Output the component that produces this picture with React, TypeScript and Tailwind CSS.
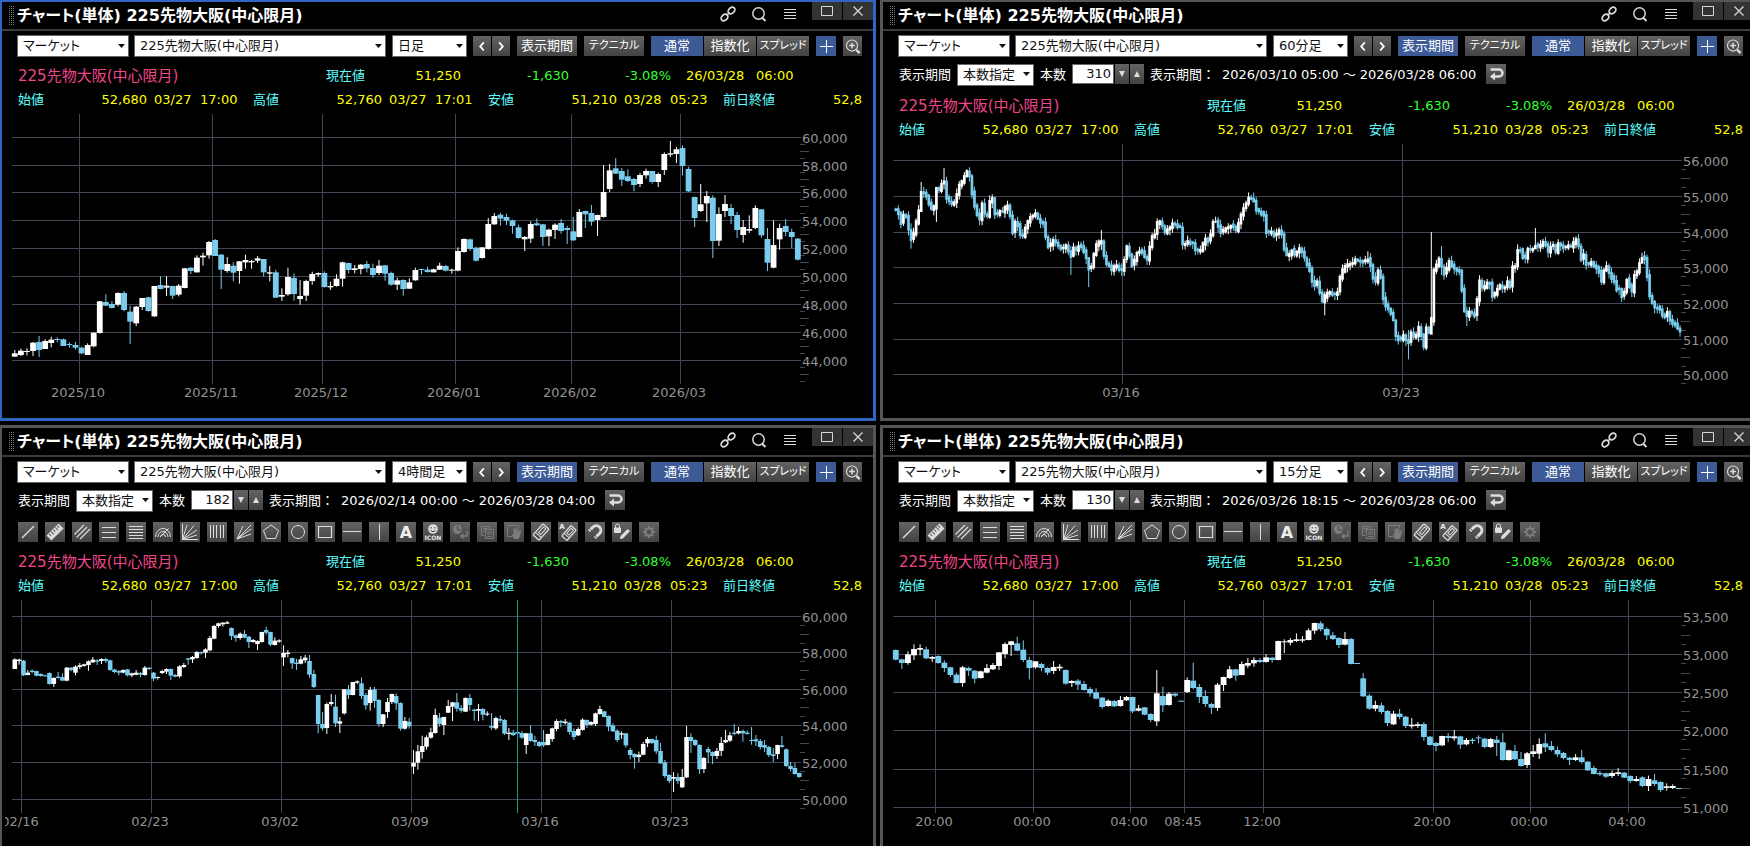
import { Fragment } from 'react'
import type { ReactNode } from 'react'

type Candle = { up: boolean; top: number; bottom: number; high: number; low: number }

type ChartSpec = {
  candles: Candle[]
  step: number
  bodyWidth: number
  /* offset of the plot top in candle units (3 units = 1px) */
  origin: number
  plotHeight: number
  height: number
  rows: { at: number; label: string }[]
  cols: { x: number; label: string }[]
  marker?: number
}

type PanelSpec = {
  id: string
  active?: boolean
  interval: string
  period?: { count: string; range: string }
  tools?: boolean
  chart: ChartSpec
  frame: string
}

/* w = 陽線, b = 陰線: body top, body bottom, high, low */
const parse = (source: string): Candle[] =>
  source
    .trim()
    .split(/\s+/)
    .map((token) => {
      const [top, bottom, high, low] = token.slice(1).split(',').map(Number)
      return { up: token[0] === 'w', top, bottom, high: high ?? top, low: low ?? bottom }
    })

const DAILY = parse(`
w730,740,720,740 w722,735,716,738 w723,726,715,736 w698,723,696,738 b696,720,678,741 w693,717,688,717
w689,699,680,712 b687,690,682,697 b688,708,686,708 b702,705,697,713 b705,713,696,719 b713,730,710,733
w705,735,700,735 w668,709,667,712 w574,669,573,671 b576,587,553,588 b582,594,573,595 w549,584,547,589
b549,600,543,604 b605,635,587,702 w590,640,588,648 w564,591,564,600 b562,603,560,605 w528,619,528,621
b525,537,499,538 w527,533,499,558 b528,557,527,567 w527,554,522,559 w475,534,474,535 b473,483,472,492
w443,487,436,488 w437,442,428,467 w396,436,393,446 b390,438,387,438 b434,479,432,537 w462,483,441,488
b467,488,457,514 w454,483,453,521 w450,457,434,476 w453,457,450,476 w445,452,438,459 b447,487,447,500
w487,491,468,514 b487,563,479,563 w555,560,535,573 w501,553,473,557 b504,552,490,572 w558,567,510,584
w513,557,509,573 w492,513,485,524 w489,494,487,500 b489,531,484,533 w528,532,515,540 w506,528,493,530
w457,506,455,530 b459,480,458,490 w475,480,465,490 w464,477,462,493 b462,475,453,487 b474,495,461,503
w467,489,450,495 b466,491,465,512 b489,524,485,527 w511,524,503,540 b510,537,508,557 w517,536,505,537
w480,511,473,512 b477,480,476,494 b479,486,470,488 w478,487,476,488 w467,479,458,480 b468,482,465,484
w479,482,476,491 w423,482,412,484 w387,426,385,428 b388,417,386,422 b413,452,410,455 w412,444,411,446
w342,417,324,419 w318,343,309,345 b314,326,308,347 b321,332,311,345 b331,348,329,371 b352,384,344,386
w381,388,378,423 w342,386,334,399 b340,346,325,348 b343,381,342,408 w359,379,356,408 w344,360,340,387
b339,363,327,371 b354,360,348,402 b364,391,321,393 w306,381,297,382 b303,313,302,354 b309,335,285,347
w315,330,314,378 w246,321,165,323 w181,237,162,246 b175,191,144,192 b183,209,174,228 b199,213,178,216
b207,225,204,244 w195,222,189,231 w183,196,176,206 b183,216,183,221 w192,216,188,231 w132,180,127,195
w130,134,93,141 w118,132,111,159 b114,168,106,196 b177,244,170,246 b261,324,260,351 w283,303,222,306
w258,280,243,336 b263,393,256,444 w312,392,292,408 w282,303,255,321 b294,318,282,342 b315,360,306,384
w351,375,330,398 w357,362,316,369 w294,354,286,357 b298,376,297,383 b387,458,354,483 w405,473,331,475
w354,388,341,419 b348,366,327,378 b366,381,356,414 b386,449,384,451`)

const FOUR_HOUR = parse(`
w208,237,205,237 w209,213,206,224 b212,256,210,258 w248,255,240,256 b242,246,238,250 b243,257,242,259
b252,258,250,260 b256,259,254,260 b249,282,247,284 w264,282,262,291 b260,264,246,266 b261,272,250,273
w233,272,231,274 b233,240,231,244 w230,248,226,256 w226,231,219,237 w223,228,221,230 w214,225,211,242
w209,217,201,219 b211,215,208,225 w207,213,205,222 b207,213,204,219 b211,240,209,243 b239,246,236,250
b243,248,240,256 w240,248,238,250 b238,256,237,259 w250,256,248,261 w248,254,240,256 b249,254,246,262
w233,255,228,257 b233,237,232,240 b248,266,246,273 w261,264,259,269 w243,249,239,252 w237,245,235,252
b237,257,235,270 b255,260,252,262 w229,259,226,263 w225,231,219,234 b205,209,204,224 w201,208,198,219
w186,204,183,206 b186,190,184,194 w178,188,175,204 w144,181,138,184 w108,146,105,148 w100,108,98,113
w98,103,96,110 w97,101,93,102 b114,138,112,150 b136,144,134,155 w131,144,127,149 b132,143,120,145
b140,156,138,174 w150,156,147,158 w153,162,151,180 w126,156,125,158 b120,128,110,134 b126,164,125,168
w152,165,142,166 w151,155,148,158 w189,202,166,228 w188,192,180,202 b204,220,203,237 b218,222,206,240
w208,221,198,223 w203,211,195,219 b213,254,195,263 b252,291,240,294 b315,402,315,430 b402,415,366,422
w342,414,338,432 w336,342,312,348 b350,400,314,411 w394,401,381,429 w298,370,297,374 b298,315,285,327
w276,315,276,316 w274,278,271,282 b280,318,262,327 b315,346,309,359 w300,339,291,362 b298,333,291,353
b330,402,327,410 w373,402,372,411 w336,366,324,384 w312,336,311,342 b318,340,310,360 b339,416,337,422
w393,416,381,419 b395,409,384,416 w518,530,480,552 w484,518,465,539 w468,486,437,506 w442,470,436,479
w427,443,413,446 w375,429,356,431 b383,402,369,410 w381,405,380,435 w348,368,330,369 w337,350,336,393
b337,356,309,365 b354,362,345,368 w324,365,322,366 b324,345,312,362 b359,363,356,392 w357,362,342,393
b357,374,354,391 w371,374,364,378 b408,413,369,420 w384,415,380,420 b387,392,376,399 b390,431,387,435
w428,432,414,450 b428,435,420,438 b426,431,417,474 b429,443,423,447 w430,465,429,492 b430,453,405,455
b450,456,437,468 b456,468,453,471 b456,466,420,471 w432,465,431,466 w415,447,413,455 w393,417,388,424
b393,398,390,412 w395,399,387,404 b398,426,395,434 b423,441,415,450 w417,436,412,438 w389,420,385,422
b390,405,388,414 w396,404,394,406 w370,402,368,408 w357,372,347,374 b364,381,362,382 b378,410,376,424
b406,424,400,426 b422,450,418,456 w430,434,424,446 b430,466,429,473 b480,495,474,508 b492,502,489,536
w494,501,485,516 w462,494,456,496 w447,460,441,471 b447,459,446,462 b450,484,437,492 b483,520,459,522
b517,558,510,564 b555,573,552,579 w561,566,546,606 b561,573,549,582 w561,592,537,594 w441,562,408,564
b441,453,430,489 b450,465,448,468 b465,538,463,552 w504,537,501,549 b477,487,471,519 b486,498,484,522
w483,498,474,507 w459,483,441,498 w450,457,420,459 w436,452,426,456 b428,432,402,436 w423,430,411,433
b423,430,418,455 b428,432,422,434 b450,453,411,464 b448,454,435,468 b453,471,447,479 b465,473,450,486
b471,495,468,501 b493,498,474,516 w465,492,464,507 b466,471,438,473 b478,528,475,531 b528,537,516,544
b534,552,519,554 b549,561,548,563`)

const QUARTER = parse(`
b180,209,178,211 b208,219,206,237 w193,219,184,224 w177,196,163,210 w174,179,163,196 b178,205,170,208
w201,206,198,216 b198,219,196,221 b218,234,211,246 b232,255,230,261 b254,279,248,280 w232,279,228,290
b234,242,230,258 b242,266,240,280 w244,264,242,266 w234,248,222,250 w225,238,219,240 w187,228,186,240
w162,192,157,205 w154,165,153,198 b160,182,140,184 b179,210,151,216 b210,234,201,268 w214,232,213,236
b222,234,219,244 b234,248,232,255 w231,243,213,252 w230,235,222,243 b240,281,238,284 w273,279,270,291
b272,284,267,300 b282,300,273,302 b297,310,291,320 b307,326,295,328 b323,351,321,356 w332,348,328,350
b333,349,330,351 w330,348,318,350 w321,331,318,333 b321,364,320,369 w355,362,345,364 b352,374,351,376
b372,390,369,396 w310,394,240,408 b318,346,290,366 w311,345,306,347 b311,317,309,321 b332,335
w270,306,262,309 b272,294,218,298 b291,321,282,339 b318,342,300,351 b342,353,339,372 w284,354,279,363
w261,285,260,303 w238,264,228,267 b238,257,236,272 w222,255,214,256 w219,227,204,234 w210,220,202,230
b210,216,204,219 w202,216,192,218 b203,210,201,218 w153,210,152,211 w154,157,148,189 w150,158,144,166
w148,153,130,156 w148,152,138,158 w121,150,115,151 w99,122,98,132 b100,118,94,124 b117,136,112,150
b136,147,126,150 b144,165,142,174 w147,164,126,166 b147,222,144,223 b219,222 b265,319,249,321
b317,356,312,359 w345,356,332,364 b346,366,338,372 b363,399,360,408 w371,403,362,405 b371,381,357,388
b380,408,378,414 w404,409,384,416 w403,408,396,414 b402,441,397,452 b440,465,438,467 b459,468,456,484
w438,466,437,468 b438,444,429,456 w439,445,420,452 b439,464,437,477 w450,463,444,466 b449,453,444,462
b442,444,436,460 b446,471,444,474 w447,471,444,474 b449,459,438,498 b457,510,429,512 w481,510,479,512
b483,508,465,510 b507,528,486,530 w490,525,486,534 w484,492,465,501 w462,491,445,507 b460,472,430,486
b468,480,453,484 b480,493,470,500 b489,504,486,508 b503,510,501,525 w502,510,492,513 b502,516,480,521
b515,541,513,543 b534,552,528,553 b549,553,543,558 b550,560,548,564 w549,558,541,564 w547,552,534,558
b548,563,546,564 b558,573,556,579 w567,573,558,575 b562,588,559,591 w567,588,557,603 b571,582,552,588
b576,600,574,606 w589,594,580,602 w588,594,583,597 b594,596`)

/* 60分足: turning points of the close, candles are built between them */
const HOURLY_POINTS = `
26:205 34:222 37:248 45:210 49:250 55:298 59:290 67:228 71:200 72:155 80:155 88:190 96:222 99:140 106:148
114:115 120:175 127:190 134:185 141:140 148:122 156:92 164:115 166:175 173:215 180:240 183:185 191:240
198:180 202:175 208:232 214:210 221:215 228:193 233:208 237:285 245:230 251:285 257:285 265:245 272:225
280:222 287:245 295:245 299:305 304:322 311:300 318:310 324:322 332:320 337:315 342:360 347:320 355:330
358:312 365:325 370:345 375:385 382:375 386:322 394:305 400:303 404:360 412:378 418:390 424:372 430:385
437:390 438:370 444:320 449:345 455:383 460:340 470:328 475:350 483:358 487:290 495:280 500:240 506:248
512:275 520:262 528:250 536:258 542:262 545:315 552:305 560:308 565:308 568:330 574:332 580:320 584:295
592:302 596:275 600:240 607:245 611:275 617:270 624:262 632:255 642:270 648:230 655:200 663:175 672:178
677:205 686:218 692:228 697:295 702:265 708:285 718:272 724:285 728:330 734:352 740:325 747:345 756:322
762:340 766:365 773:385 778:425 781:445 785:410 790:445 797:490 801:465 808:455 815:460 822:462 826:440
829:400 834:385 840:372 848:370 855:360 860:362 870:362 878:355 882:365 885:405 892:425 896:388 902:410
906:480 912:500 919:515 925:545 929:590 936:598 943:585 947:600 949:652 953:575 958:575 963:598 970:560
976:592 980:630 982:555 988:578 992:575 994:440 999:360 1003:380 1008:342 1013:405 1018:395 1025:362
1033:383 1042:390 1046:410 1049:490 1054:530 1062:512 1071:525 1076:465 1080:415 1085:450 1092:425
1098:430 1103:472 1110:450 1117:432 1123:445 1130:425 1134:445 1136:380 1144:378 1149:315 1154:335
1160:360 1167:322 1173:330 1180:315 1188:318 1196:300 1203:335 1210:308 1216:335 1222:305 1228:320
1238:318 1246:320 1251:292 1257:305 1260:360 1267:345 1273:380 1279:362 1286:375 1295:395 1299:425
1306:370 1314:402 1322:425 1328:455 1332:442 1337:480 1344:415 1349:435 1353:460 1357:408 1364:390
1370:350 1377:355 1379:400 1383:410 1385:465 1392:490 1397:510 1401:495 1406:520 1412:530 1417:512
1425:550 1432:552 1437:570 1443:572`
  .trim()
  .split(/\s+/)
  .map((pair) => pair.split(':').map(Number))

/* candle index -> [high, low] for the long wicks */
const HOURLY_WICKS: Record<number, [number, number]> = {
  6: [250, 326], 10: [126, 195], 19: [84, 148], 16: [150, 246], 69: [318, 405], 76: [378, 441], 81: [270, 330],
  141: [158, 185], 169: [455, 526], 202: [570, 658], 211: [276, 580], 215: [318, 405], 252: [264, 320],
  294: [338, 360], 225: [500, 558], 186: [334, 372],
}

const levelAt = (x: number) => {
  const next = HOURLY_POINTS.findIndex(([px]) => px >= x)
  if (next <= 0) return HOURLY_POINTS[next === 0 ? 0 : HOURLY_POINTS.length - 1][1]
  const [x0, y0] = HOURLY_POINTS[next - 1]
  const [x1, y1] = HOURLY_POINTS[next]
  return y0 + ((y1 - y0) * (x - x0)) / (x1 - x0)
}

const HOURLY: Candle[] = Array.from({ length: 310 }, (_, i) => {
  const x = 26 + i * 4.57
  const open = levelAt(x - 2.3)
  const close = levelAt(x + 2.3)
  const top = Math.min(open, close) - ((i * 5) % 6)
  const bottom = Math.max(open, close) + 3 + ((i * 3) % 7)
  const [high, low] = HOURLY_WICKS[i] ?? [top - 2 - ((i * 7) % 13), bottom + 2 + ((i * 11) % 14)]
  return { up: close < open, top, bottom, high, low }
})

const labels = (from: number, by: number, at: number[]) =>
  at.map((y, i) => ({ at: y, label: (from - i * by).toLocaleString('en-US') }))

const PANELS: PanelSpec[] = [
  {
    id: 'daily',
    active: true,
    interval: '日足',
    frame: 'border-t-2 border-l-2 border-r-3 border-b-3',
    chart: {
      candles: DAILY,
      step: 6.07,
      bodyWidth: 5.8,
      origin: 12,
      plotHeight: 270,
      height: 300,
      rows: labels(60000, 2000, [82, 166, 247, 331, 415, 499, 583, 667, 751]),
      cols: [
        { x: 79, label: '2025/10' },
        { x: 212, label: '2025/11' },
        { x: 322, label: '2025/12' },
        { x: 455, label: '2026/01' },
        { x: 571, label: '2026/02' },
        { x: 680, label: '2026/03' },
      ],
    },
  },
  {
    id: 'hourly',
    interval: '60分足',
    frame: 'border-t-2 border-l-3 border-r-2 border-b-3',
    period: { count: '310', range: '2026/03/10 05:00 ～ 2026/03/28 06:00' },
    chart: {
      candles: HOURLY,
      step: 2.538,
      bodyWidth: 2.7,
      origin: 12,
      plotHeight: 240,
      height: 270,
      rows: labels(56000, 1000, [61, 169, 277, 382, 490, 598, 703]),
      cols: [
        { x: 241, label: '03/16' },
        { x: 521, label: '03/23' },
      ],
    },
  },
  {
    id: 'four-hour',
    interval: '4時間足',
    frame: 'border-t-3 border-l-2 border-r-3 border-b-3',
    period: { count: '182', range: '2026/02/14 00:00 ～ 2026/03/28 04:00' },
    tools: true,
    chart: {
      candles: FOUR_HOUR,
      step: 4.334,
      bodyWidth: 4.6,
      origin: 30,
      plotHeight: 213,
      height: 240,
      rows: labels(60000, 2000, [79, 187, 298, 406, 517, 628]),
      cols: [
        { x: 21, label: '02/16' },
        { x: 151, label: '02/23' },
        { x: 281, label: '03/02' },
        { x: 411, label: '03/09' },
        { x: 541, label: '03/16' },
        { x: 671, label: '03/23' },
      ],
      marker: 517,
    },
  },
  {
    id: 'quarter',
    interval: '15分足',
    frame: 'border-t-3 border-l-3 border-r-2 border-b-3',
    period: { count: '130', range: '2026/03/26 18:15 ～ 2026/03/28 06:00' },
    tools: true,
    chart: {
      candles: QUARTER,
      step: 6.07,
      bodyWidth: 5.8,
      origin: 30,
      plotHeight: 213,
      height: 240,
      rows: labels(53500, 500, [79, 193, 307, 421, 538, 652]),
      cols: [
        { x: 54, label: '20:00' },
        { x: 152, label: '00:00' },
        { x: 249, label: '04:00' },
        { x: 303, label: '08:45' },
        { x: 382, label: '12:00' },
        { x: 552, label: '20:00' },
        { x: 649, label: '00:00' },
        { x: 747, label: '04:00' },
      ],
    },
  },
]

const BUTTON = 'flex h-5 shrink-0 items-center justify-center whitespace-nowrap'
const GRAY = 'bg-linear-to-b from-[#636363] to-[#434343]'
const BLUE = 'bg-[#3c5a96]'

function Icon({ size = 20, children }: { size?: number; children: ReactNode }) {
  return (
    <svg
      width={size}
      height={size}
      viewBox="0 0 20 20"
      fill="none"
      stroke="currentColor"
      strokeWidth="1"
      className="shrink-0"
      aria-hidden="true"
    >
      {children}
    </svg>
  )
}

const DRAW_TOOLS: { name: string; dim?: boolean; art: ReactNode }[] = [
  { name: 'トレンドライン', art: <path d="M4 16 16 4" strokeWidth="1.5" /> },
  {
    name: '定規',
    art: (
      <g transform="rotate(-45 10 10)">
        <rect x="1.5" y="6.500" width="17" height="7" fill="#ddd" stroke="none" />
        <path d="M4.500 7v3M7.500 7v4M10.500 7v3M13.500 7v4M16 7v3" stroke="#555" />
      </g>
    ),
  },
  { name: '平行線', art: <path d="M2.500 12.500 12 3M4.500 15.500 15 5M8 17l10-10" strokeWidth="1.200" /> },
  { name: '3本線', art: <path d="M3 5.500h14M3 10.500h14M3 15.500h14" /> },
  { name: '5本線', art: <path d="M3 4.500h14M3 7.500h14M3 10.500h14M3 13.500h14M3 16.500h14" /> },
  {
    name: 'アーク',
    art: <path d="M2.500 15a7.500 8.500 0 0 1 15 0M5 15a5 5.500 0 0 1 10 0M7.500 15a2.500 2.500 0 0 1 5 0M7 15l8.500-8.500" />,
  },
  { name: 'ファン', art: <path d="M2.500 2v15.500H18M2.500 17.500 7 3M2.500 17.500 14 3.500M2.500 17.500 17 8M2.500 17.500 17 13" /> },
  { name: '縦線5本', art: <path d="M3.500 3v13M6.500 3v13M9.500 3v13M13.500 3v13M16.500 3v13" /> },
  { name: 'スピードライン', art: <path d="M3 17 9 4M3 17 17 3M3 17l14-10M3 17l14-5" /> },
  { name: '五角形', art: <path d="M10 3 17.500 8.500 14.500 16.500h-9L2.500 8.500z" /> },
  { name: '円', art: <circle cx="10" cy="10" r="6.500" /> },
  { name: '四角形', art: <path d="M3.500 4.500h13v11h-13z" strokeWidth="1.200" /> },
  { name: '水平線', art: <path d="M1 9.500h18" /> },
  { name: '垂直線', art: <path d="M10.500 2v16" /> },
  {
    name: 'テキスト',
    art: (
      <text x="10" y="16" textAnchor="middle" fontSize="16" fontWeight="700" fill="#eee" stroke="none">
        A
      </text>
    ),
  },
  {
    name: 'アイコン',
    art: (
      <>
        <circle cx="10" cy="7" r="4.800" fill="#ddd" stroke="none" />
        <path d="M8.200 5v1.500M11.800 5v1.500M7.500 8.500q2.500 2.500 5 0" stroke="#444" />
        <text x="10" y="18" textAnchor="middle" fontSize="6" fontWeight="700" fill="#eee" stroke="none">
          ICON
        </text>
      </>
    ),
  },
  {
    name: '履歴',
    dim: true,
    art: (
      <>
        <circle cx="7.500" cy="7.500" r="4.500" fill="currentColor" stroke="none" />
        <path d="M7.500 4v4h4" stroke="#484848" />
        <path d="M17 9v5h-5M13.500 12l-2.500 2 2.500 2.500" strokeWidth="1.500" />
      </>
    ),
  },
  {
    name: 'コピー',
    dim: true,
    art: <path d="M7 13.500H4.500v-9h8V7M6 6.500h4M6 9h2M8.500 7.500h8v9h-8zM10 10h5M10 12h5M10 14.500h5" />,
  },
  {
    name: '移動',
    dim: true,
    art: (
      <>
        <path d="M8 14.500H3.500v-11h11V6" />
        <path d="M10 17 7.500 12l2 .5V7h1.500v4-5h1.500v5l.5-4.500h1.500V11l1-3h1.500l-1 6-1.500 3z" fill="currentColor" stroke="none" />
      </>
    ),
  },
  {
    name: '消去',
    art: (
      <g transform="rotate(-48 10 10)">
        <rect x="2.500" y="6" width="15" height="8" rx="1" strokeWidth="1.300" />
        <path d="M6 6v8M8 8.500h7.500v3H8z" />
      </g>
    ),
  },
  {
    name: '全消去',
    art: (
      <>
        <g transform="rotate(-48 11 11)">
          <rect x="4" y="7.500" width="14" height="7" rx="1" strokeWidth="1.300" />
          <path d="M7.500 7.500v7M9.500 9.500H16v3H9.500z" />
        </g>
        <text x="4" y="7" textAnchor="middle" fontSize="7" fontWeight="700" fill="#eee" stroke="none">
          A
        </text>
      </>
    ),
  },
  {
    name: 'マグネット',
    art: (
      <>
        <path d="m4 9 4-4a4.500 4.500 0 0 1 6.500 6.500L10 16" strokeWidth="3" />
        <path d="m4.500 6.500 3 3M9.500 13l3 3" stroke="#555" />
      </>
    ),
  },
  {
    name: '描画ロック',
    art: (
      <>
        <path d="M2.500 6h6v4.500h-6z" fill="currentColor" />
        <path d="M3.500 6V4a2 2 0 0 1 4 0v2" />
        <path d="m8 17 .5-3 7-7 2.500 2-7 7.500z" fill="currentColor" stroke="none" />
      </>
    ),
  },
  {
    name: '設定',
    dim: true,
    art: (
      <>
        <circle cx="10" cy="10" r="3.500" strokeWidth="2" />
        <path d="M10 4v2M10 14v2M4 10h2M14 10h2M5.800 5.800l1.400 1.400M12.800 12.800l1.400 1.400M5.800 14.200l1.400-1.400M12.800 7.200l1.400-1.400" strokeWidth="2" />
      </>
    ),
  },
]

function Dropdown({ label, value, className }: { label: string; value: string; className: string }) {
  return (
    <div className={`relative h-[22px] shrink-0 ${className}`}>
      <select
        aria-label={label}
        defaultValue={value}
        className="h-full w-full appearance-none border border-[#666] bg-white pl-[5px] text-[13px] leading-5 text-[#111]"
      >
        <option>{value}</option>
      </select>
      <svg width="7" height="4" viewBox="0 0 7 4" className="pointer-events-none absolute top-[9px] right-1" aria-hidden="true">
        <path d="M0 0h7L3.500 4z" fill="#111" />
      </svg>
    </div>
  )
}

function TitleBar() {
  return (
    <header className="flex h-[29px] items-start border-b-2 border-[#3a3a3c] text-[#d8d8d8]">
      <svg width="5" height="19" className="mt-1 ml-[7px] shrink-0" aria-hidden="true">
        {[0, 2, 4].map((x) => (
          <path key={x} d={`M${x + 0.5} 0v19`} stroke="#777" strokeDasharray="1 1" />
        ))}
      </svg>
      <h2 className="ml-[3px] flex-1 text-base leading-7 font-bold whitespace-nowrap text-white">
        チャート(単体) 225先物大阪(中心限月)
      </h2>
      <div className="mt-[2px] mr-3 flex gap-[11px]">
        <button type="button" aria-label="連動">
          <Icon>
            <ellipse cx="6.500" cy="13.500" rx="3.800" ry="2.800" transform="rotate(-45 6.500 13.500)" strokeWidth="1.800" />
            <ellipse cx="13.500" cy="6.500" rx="3.800" ry="2.800" transform="rotate(-45 13.500 6.500)" strokeWidth="1.800" />
            <path d="m8.500 11.500 3-3" strokeWidth="1.500" />
          </Icon>
        </button>
        <button type="button" aria-label="検索">
          <Icon>
            <circle cx="9.500" cy="9.500" r="5.700" strokeWidth="1.500" />
            <path d="m13 13.500 3.500 3.500" strokeWidth="2" />
          </Icon>
        </button>
        <button type="button" aria-label="メニュー">
          <Icon>
            <path d="M4 5.500h12M4 8.500h12M4 11.500h12M4 14.500h12" />
          </Icon>
        </button>
      </div>
      <div className="flex gap-px">
        <button type="button" aria-label="最大化" className="flex h-[18px] w-[30px] items-center justify-center bg-[#333]">
          <svg width="12" height="10" fill="none" stroke="currentColor" aria-hidden="true">
            <path d="M.5.5h11v9H.5z" />
          </svg>
        </button>
        <button type="button" aria-label="閉じる" className="flex h-[18px] w-[30px] items-center justify-center bg-[#333]">
          <svg width="10" height="10" fill="none" stroke="currentColor" strokeWidth="1.3" aria-hidden="true">
            <path d="m.5.5 9 9M9.500.5l-9 9" />
          </svg>
        </button>
      </div>
    </header>
  )
}

function Toolbar({ interval, periodOn }: { interval: string; periodOn: boolean }) {
  return (
    <div className="flex h-8 items-start pt-1 pl-[15px] text-[13px]">
      <Dropdown label="区分" value="マーケット" className="w-28" />
      <Dropdown label="銘柄" value="225先物大阪(中心限月)" className="ml-[5px] w-[252px]" />
      <Dropdown label="足種" value={interval} className="ml-[6px] w-[75px]" />
      <div className="mt-px flex">
        <button type="button" aria-label="前へ" className={`${BUTTON} ${GRAY} ml-[6px] w-[18px]`}>
          <Icon size={18}>
            <path d="m12 6-4 4.500 4 4.500" strokeWidth="2" />
          </Icon>
        </button>
        <button type="button" aria-label="次へ" className={`${BUTTON} ${GRAY} ml-px w-[18px]`}>
          <Icon size={18}>
            <path d="m8 6 4 4.500L8 15" strokeWidth="2" />
          </Icon>
        </button>
        <button type="button" className={`${BUTTON} ${periodOn ? BLUE : GRAY} ml-[7px] w-[60px]`}>
          表示期間
        </button>
        <button type="button" className={`${BUTTON} ${GRAY} ml-[7px] w-[60px] text-[11px]`}>
          テクニカル
        </button>
        <button type="button" className={`${BUTTON} ${BLUE} ml-[7px] w-[52px]`}>
          通常
        </button>
        <button type="button" className={`${BUTTON} ${GRAY} ml-px w-[52px]`}>
          指数化
        </button>
        <button type="button" className={`${BUTTON} ${GRAY} ml-px w-[52px] text-[11px]`}>
          スプレッド
        </button>
        <button type="button" aria-label="十字カーソル" className={`${BUTTON} ${BLUE} ml-[7px] w-5`}>
          <Icon>
            <path d="M4 10.500h13M10.500 4v13" />
          </Icon>
        </button>
        <button type="button" aria-label="拡大" className={`${BUTTON} ${GRAY} ml-[7px] w-[19px] text-[#ddd]`}>
          <Icon size={19}>
            <circle cx="9.500" cy="9" r="5.800" strokeWidth="1.200" />
            <path d="M6.500 9h6M9.500 6v6" strokeWidth="1.600" />
            <path d="m14 13.500 3.500 3.500" strokeWidth="2.500" />
          </Icon>
        </button>
      </div>
    </div>
  )
}

function PeriodBar({ id, count, range }: { id: string; count: string; range: string }) {
  return (
    <div className="flex h-[30px] items-start pl-4 text-[13px] leading-6 whitespace-nowrap">
      <span className="w-[58px]">表示期間</span>
      <Dropdown label="期間の指定方法" value="本数指定" className="w-[77px]" />
      <label htmlFor={`count-${id}`} className="ml-[6px] w-8">
        本数
      </label>
      <div className="mt-px flex gap-px">
        <input
          id={`count-${id}`}
          defaultValue={count}
          className="h-5 w-[42px] border border-[#666] bg-white pr-[2px] text-right text-[13px] text-[#111]"
        />
        <button type="button" aria-label="減らす" className={`${BUTTON} ${GRAY} w-[14px]`}>
          <svg width="6" height="6" aria-hidden="true">
            <path d="M0 0h6L3 6z" fill="#ddd" />
          </svg>
        </button>
        <button type="button" aria-label="増やす" className={`${BUTTON} ${GRAY} w-[14px]`}>
          <svg width="6" height="6" aria-hidden="true">
            <path d="M0 6h6L3 0z" fill="#ddd" />
          </svg>
        </button>
      </div>
      <span className="ml-[6px] w-[72px] [font-feature-settings:normal]">表示期間：</span>
      <span className="w-[257px] [font-feature-settings:normal]">{range}</span>
      <button type="button" aria-label="戻す" className={`${BUTTON} ${GRAY} mt-px ml-[7px] w-5 text-[#ddd]`}>
        <Icon>
          <path d="M4.500 5.500h8.500a3.500 3.500 0 0 1 0 7H8" strokeWidth="2.500" />
          <path d="M4 12.500 9 8.500v8z" fill="currentColor" stroke="none" />
        </Icon>
      </button>
    </div>
  )
}

function DrawBar() {
  return (
    <div className="flex h-[30px] items-start gap-[7px] pt-[3px] pl-4">
      {DRAW_TOOLS.map((tool) => (
        <button
          key={tool.name}
          type="button"
          aria-label={tool.name}
          disabled={tool.dim}
          className={`${BUTTON} ${GRAY} w-5 ${tool.dim ? 'text-[#7c7c7c]' : 'text-[#ddd]'}`}
        >
          <Icon>{tool.art}</Icon>
        </button>
      ))}
    </div>
  )
}

const QUOTES = [
  { label: '始値', value: '52,680', date: '03/27', time: '17:00' },
  { label: '高値', value: '52,760', date: '03/27', time: '17:01' },
  { label: '安値', value: '51,210', date: '03/28', time: '05:23' },
]

function QuoteInfo() {
  return (
    <div className="pt-px pl-4 text-[13px] whitespace-nowrap text-[#ffff00]">
      <div className="flex h-6 items-center">
        <span className="w-[308px] text-[15px] text-[#f0468c]">225先物大阪(中心限月)</span>
        <span className="w-[39px] text-[#5cffff]">現在値</span>
        <span className="w-24 text-right">51,250</span>
        <span className="w-[108px] text-right text-[#33ff33]">-1,630</span>
        <span className="w-[102px] text-right text-[#33ff33]">-3.08%</span>
        <span className="ml-[15px] w-[70px]">26/03/28</span>
        <span>06:00</span>
      </div>
      <div className="flex h-6 items-center">
        {QUOTES.map((quote) => (
          <div key={quote.label} className="flex w-[235px] shrink-0">
            <span className="w-[26px] text-[#5cffff]">{quote.label}</span>
            <span className="w-[103px] text-right">{quote.value}</span>
            <span className="ml-[7px] w-[46px]">{quote.date}</span>
            <span>{quote.time}</span>
          </div>
        ))}
        <span className="w-[52px] text-[#5cffff]">前日終値</span>
        <span className="ml-[58px]">52,8</span>
      </div>
    </div>
  )
}

function Chart({ spec }: { spec: ChartSpec }) {
  const y = (units: number) => (units - spec.origin) / 3
  const gap = (spec.rows[1].at - spec.rows[0].at) / 4
  return (
    <svg
      viewBox={`5 0 868 ${spec.height}`}
      preserveAspectRatio="xMinYMin meet"
      className="mt-[2px] ml-[3px] block w-[calc(100%-3px)]"
      role="img"
      aria-label="ローソク足チャート"
    >
      <g stroke="#434654" shapeRendering="crispEdges">
        {spec.rows.map((row) => {
          const at = Math.floor(y(row.at)) + 0.5
          return (
            <Fragment key={row.label}>
              <path d={`M12 ${at}H801`} />
              {[1, 2, 3].map((n) => {
                const tick = Math.floor(y(row.at + gap * n)) + 0.5
                return tick < spec.plotHeight ? <path key={n} d={`M800 ${tick}h${n === 2 ? 9 : 5}`} /> : null
              })}
            </Fragment>
          )
        })}
        {spec.cols.map((col) => (
          <path key={col.x} d={`M${col.x + 0.5} 0V${spec.plotHeight}`} />
        ))}
      </g>
      {spec.candles.map((candle, i) => {
        const x = 14.8 + i * spec.step
        const color = candle.up ? '#ffffff' : '#78cdee'
        return (
          <g key={i} fill={color}>
            <rect x={x - 0.5} y={y(candle.high)} width="1" height={(candle.low - candle.high) / 3} />
            <rect
              x={x - spec.bodyWidth / 2}
              y={y(candle.top)}
              width={spec.bodyWidth}
              height={Math.max(1, (candle.bottom - candle.top) / 3)}
            />
          </g>
        )
      })}
      {spec.marker && (
        <path d={`M${spec.marker + 0.5} 0V${spec.plotHeight}`} stroke="#149a88" shapeRendering="crispEdges" />
      )}
      <g fill="#929292" fontSize="13">
        {spec.rows.map((row) => (
          <text key={row.label} x="802" y={Math.round(y(row.at)) + 6}>
            {row.label}
          </text>
        ))}
        {spec.cols.map((col) => (
          <text key={col.x} x={col.x - 1} y={spec.plotHeight + 13} textAnchor="middle">
            {col.label}
          </text>
        ))}
      </g>
    </svg>
  )
}

function Panel({ panel }: { panel: PanelSpec }) {
  return (
    <section
      className={`min-w-0 overflow-hidden bg-black ${panel.frame} ${panel.active ? 'border-[#3264c3]' : 'border-[#555]'}`}
    >
      <TitleBar />
      <Toolbar interval={panel.interval} periodOn={!!panel.period} />
      {panel.period && <PeriodBar id={panel.id} {...panel.period} />}
      {panel.tools && <DrawBar />}
      <QuoteInfo />
      <Chart spec={panel.chart} />
    </section>
  )
}

export default function App() {
  return (
    <main className="h-screen overflow-hidden bg-black font-['DejaVu_Sans','Noto_Sans_CJK_JP',sans-serif] text-white [font-feature-settings:'palt']">
      <div className="grid w-[calc(100%+6px)] grid-cols-2 grid-rows-[calc(50vh-2px)_calc(50vh+4px)] gap-1">
        {PANELS.map((panel) => (
          <Panel key={panel.id} panel={panel} />
        ))}
      </div>
    </main>
  )
}
